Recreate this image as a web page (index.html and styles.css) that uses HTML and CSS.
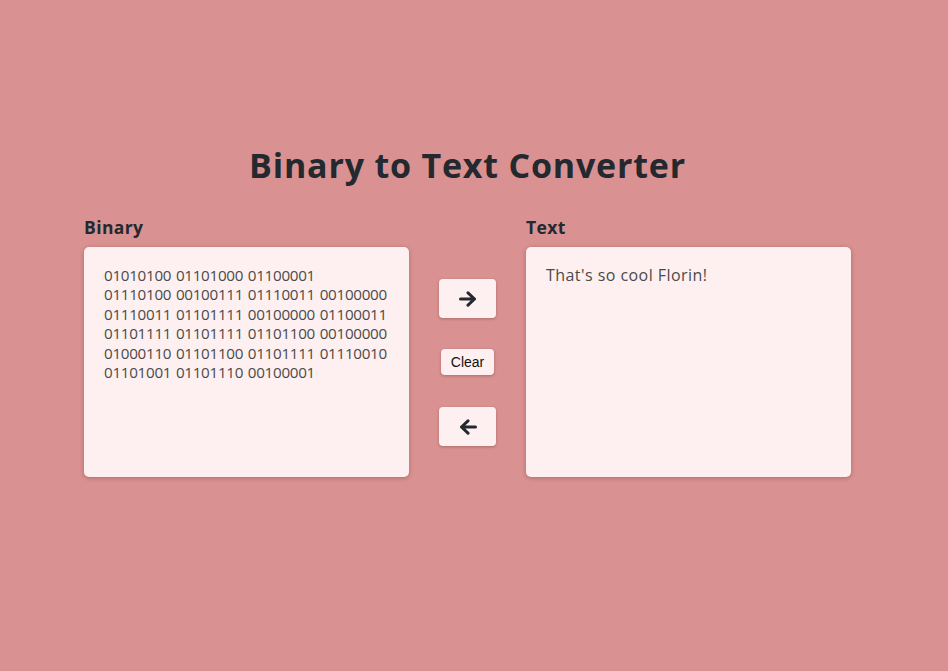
FILE: index.html
```html
<!DOCTYPE html>
<html lang="en">
<head>
<meta charset="utf-8">
<title>Binary to Text Converter</title>
<link rel="stylesheet" href="styles.css">
</head>
<body>
<main class="page">
  <h1 class="title">Binary to Text Converter</h1>
  <div class="converter">
    <div class="panel">
      <label class="label" for="binary">Binary</label>
      <textarea id="binary" class="box box-binary" wrap="off">01010100 01101000 01100001
01110100 00100111 01110011 00100000
01110011 01101111 00100000 01100011
01101111 01101111 01101100 00100000
01000110 01101100 01101111 01110010
01101001 01101110 00100001</textarea>
    </div>
    <div class="controls">
      <button class="btn btn-arrow" aria-label="To text">
        <svg width="18" height="16" viewBox="0 0 18 16"><path d="M1.5 8H15.5M9 1.8L15.5 8L9 14.2" fill="none" stroke="#23292e" stroke-width="3" stroke-linecap="round" stroke-linejoin="round"/></svg>
      </button>
      <button class="btn btn-clear">Clear</button>
      <button class="btn btn-arrow" aria-label="To binary">
        <svg width="18" height="16" viewBox="0 0 18 16"><path d="M16.5 8H2.5M9 1.8L2.5 8L9 14.2" fill="none" stroke="#23292e" stroke-width="3" stroke-linecap="round" stroke-linejoin="round"/></svg>
      </button>
    </div>
    <div class="panel">
      <label class="label" for="text">Text</label>
      <textarea id="text" class="box box-text">That's so cool Florin!</textarea>
    </div>
  </div>
</main>
</body>
</html>
```

FILE: styles.css
```css
* { box-sizing: border-box; }
html, body {
  margin: 0;
  padding: 0;
  background: #d99191;
  height: 100%;
}
body {
  font-family: "Open Sans", "DejaVu Sans", sans-serif;
  color: #23292e;
}
.page {
  width: 767px;
  margin-left: 84px;
  padding-top: 141px;
}
.title {
  margin: 0;
  text-align: center;
  font-size: 34px;
  line-height: 48px;
  font-weight: 700;
  color: #23292e;
  letter-spacing: 0.8px;
}
.converter {
  display: flex;
  align-items: flex-start;
  margin-top: 27px;
}
.panel {
  display: flex;
  flex-direction: column;
  width: 325px;
}
.label {
  font-size: 17.5px;
  font-weight: 700;
  line-height: 22px;
  margin-bottom: 9px;
  letter-spacing: 0.4px;
  color: #23292e;
}
.box {
  width: 325px;
  height: 230px;
  border: none;
  border-radius: 5px;
  background: #fef0f0;
  box-shadow: 0 1px 4px rgba(90, 40, 40, 0.35);
  padding: 19px 20px;
  font-family: "Open Sans", "DejaVu Sans", sans-serif;
  line-height: 19.4px;
  color: #4a4a4a;
  resize: none;
  overflow: hidden;
  outline: none;
}
.box-binary {
  font-size: 15.2px;
  letter-spacing: -0.28px;
  word-spacing: 1px;
}
.box-text {
  font-size: 16px;
  letter-spacing: 0.45px;
}
.controls {
  width: 57px;
  margin: 63px 30px 0;
  display: flex;
  flex-direction: column;
  align-items: center;
}
.btn {
  border: none;
  background: #fef0f0;
  border-radius: 4px;
  box-shadow: 0 1px 3px rgba(90, 40, 40, 0.35);
  padding: 0;
  display: flex;
  align-items: center;
  justify-content: center;
  cursor: pointer;
}
.btn-arrow {
  width: 57px;
  height: 39px;
}
.btn-clear {
  width: 53px;
  height: 26px;
  margin: 31px 0 32px;
  font-family: "Liberation Sans", Arial, sans-serif;
  font-size: 14px;
  color: #111;
}
```
